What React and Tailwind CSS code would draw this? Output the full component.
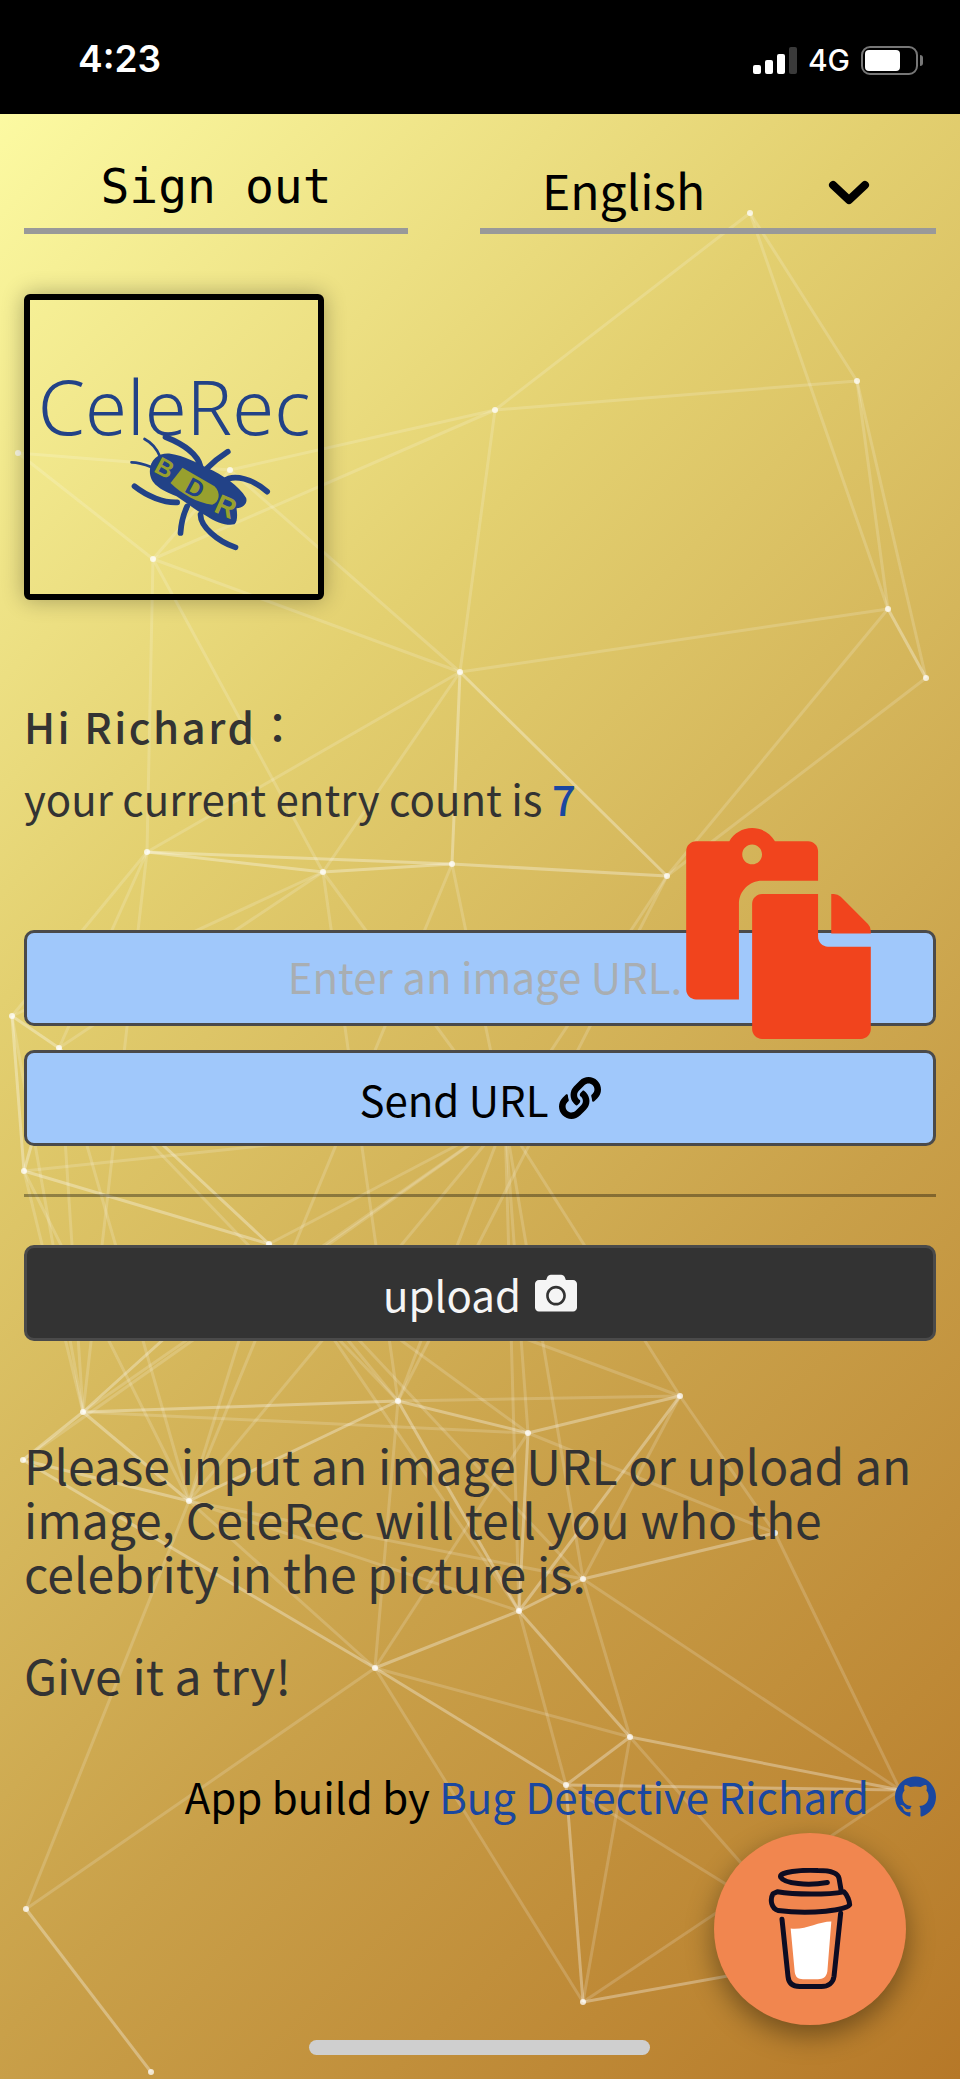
import { FaCamera, FaLink, FaPaste } from "react-icons/fa";
import { SiGithub } from "react-icons/si";

const NODES = {
  A: [750, 213], B: [857, 381], C: [495, 410], D: [888, 609], E: [926, 678], F: [460, 672],
  G: [153, 559], H: [230, 470], I: [18, 453], J: [147, 852], K: [323, 872], L: [452, 864],
  M: [667, 876], N: [12, 1016], O: [59, 1048], P: [24, 1171], Q: [269, 1244], R: [505, 1120],
  S: [83, 1412], T: [398, 1401], U: [528, 1433], V: [680, 1396], W: [23, 1460], X: [189, 1501],
  Y: [583, 1579], Z: [519, 1611], AA: [375, 1668], AB: [775, 1533], AC: [630, 1737], AD: [566, 1785],
  AE: [900, 1790], AF: [583, 2002], AG: [26, 1909], AH: [151, 2072], HA: [800, 1963], HB: [800, 1930],
};

const BRIGHT = "J-K K-L L-M J-L N-O N-P O-P P-Q O-Q S-W S-X S-T T-U U-V T-X W-X W-AA Z-AA Z-AC AD-AC AC-AE AD-AE T-Z U-Z V-Z Y-AB AA-AD AD-AF AG-AH D-E F-M F-L AF-HA Y-Z";
const FAINT =
  "A-B A-C C-B C-H C-F C-G B-D B-E A-D I-H I-G H-F G-H G-F G-J G-K F-J F-K F-D E-M D-M J-N J-O K-N K-O K-R L-R M-R " +
  "R-Q R-T R-U R-V R-X R-S R-P R-W P-S O-S O-X Q-T Q-U Q-S Q-X Q-V T-V T-AA U-AA V-AB U-AB S-U S-Q X-AA X-Z Y-AC AA-AC Y-AE AB-AE AE-AF AC-AF AG-X AG-AA AA-AF AD-HB AC-HB Z-AD " +
  "L-X M-T K-T J-S O-T N-S P-X Q-Z Q-Y R-Y R-Z V-Y X-Y";

function Network() {
  const edges = (list) => list.split(" ").map((e) => e.split("-"));
  return (
    <svg viewBox="0 0 960 2079" className="absolute inset-0 w-full h-full pointer-events-none">
      {edges(FAINT).map(([a, b]) => (
        <line key={a + b} x1={NODES[a][0]} y1={NODES[a][1]} x2={NODES[b][0]} y2={NODES[b][1]} stroke="#fff" strokeOpacity="0.17" strokeWidth="3" />
      ))}
      {edges(BRIGHT).map(([a, b]) => (
        <line key={a + b} x1={NODES[a][0]} y1={NODES[a][1]} x2={NODES[b][0]} y2={NODES[b][1]} stroke="#fff" strokeOpacity="0.32" strokeWidth="3" />
      ))}
      {Object.entries(NODES).map(([k, [x, y]]) => (
        <circle key={k} cx={x} cy={y} r="3" fill="#fff" fillOpacity="0.75" />
      ))}
    </svg>
  );
}

function Bug() {
  return (
    <svg viewBox="380 460 440 360" className="w-[147px] h-[120px] -mt-[13px] ml-[97px] self-start">
      <g fill="none" stroke="#224287" strokeLinecap="round">
        <path d="M432 478C455 490 470 510 478 530" strokeWidth="8" />
        <path d="M393 548C415 548 435 555 452 562" strokeWidth="8" />
        <path d="M495 472C540 490 590 520 600 560" strokeWidth="17" />
        <path d="M682 516C660 530 635 550 615 570" strokeWidth="17" />
        <path d="M670 605C700 580 760 600 800 636" strokeWidth="17" />
        <path d="M402 620C440 650 490 670 530 668" strokeWidth="17" />
        <path d="M560 680C548 705 542 730 540 760" strokeWidth="17" />
        <path d="M600 705C600 740 650 785 705 803" strokeWidth="17" />
      </g>
      <path d="M448 575C448 535 480 518 510 522C550 527 590 550 622 566C665 585 715 618 737 655C742 672 728 684 708 686C711 704 711 726 702 734C680 739 648 730 618 709C588 694 558 670 528 650C478 630 448 612 448 575Z" fill="#224287" />
      <path d="M510 610L546 564L642 620C662 640 657 668 635 675C590 670 543 642 510 610Z" fill="#98a02e" />
      <text x="490" y="590" transform="rotate(28 490 570)" fontFamily="'Liberation Sans',sans-serif" fontWeight="700" fontSize="74" fill="#98a02e" textAnchor="middle">B</text>
      <text x="584" y="650" transform="rotate(28 584 625)" fontFamily="'Liberation Sans',sans-serif" fontWeight="700" fontSize="72" fill="#224287" textAnchor="middle">D</text>
      <text x="677" y="710" transform="rotate(24 677 680)" fontFamily="'Liberation Sans',sans-serif" fontWeight="700" fontSize="84" fill="#98a02e" textAnchor="middle">R</text>
    </svg>
  );
}

function Cup() {
  return (
    <svg viewBox="320 385 255 365" className="w-[85px] h-[122px]">
      <path d="M388 566C430 572 470 545 510 545L498 695C495 712 485 718 470 718L425 718C410 718 402 712 400 695Z" fill="#fff" />
      <g fill="none" stroke="#0d0c22" strokeWidth="15" strokeLinecap="round" strokeLinejoin="round">
        <path d="M498 428C440 438 370 432 358 412C352 395 420 390 470 392C510 392 530 400 533 415L540 455" />
        <path d="M348 456C400 465 500 465 548 456C558 465 565 485 565 495C560 510 450 525 350 512C330 505 325 480 335 462Z" />
        <path d="M362 538L380 710C382 730 395 740 415 740L480 740C500 740 515 730 518 710L538 520" />
      </g>
    </svg>
  );
}

function StatusBar() {
  return (
    <div className="h-[114px] bg-black text-white flex items-center font-['Inter',sans-serif] relative">
      <span className="ml-[78px] text-[37px] font-semibold leading-none mt-[2px]">4:23</span>
      <div className="ml-auto mr-[37px] flex items-center gap-[11px] mt-[6px]">
        <div className="flex items-end gap-[4px] h-[27px]">
          <div className="w-[8px] h-[9px] bg-white rounded-[2px]" />
          <div className="w-[8px] h-[14px] bg-white rounded-[2px]" />
          <div className="w-[8px] h-[20px] bg-white rounded-[2px]" />
          <div className="w-[8px] h-[27px] bg-[#3a3a3a] rounded-[2px]" />
        </div>
        <span className="text-[30px] font-medium leading-none">4G</span>
        <div className="flex items-center gap-[2px]">
          <div className="w-[57px] h-[29px] border-2 border-[#777] rounded-[9px] p-[2px]">
            <div className="w-[35px] h-full bg-white rounded-[4px]" />
          </div>
          <div className="w-[3px] h-[11px] bg-[#777] rounded-r-full" />
        </div>
      </div>
    </div>
  );
}

export default function App() {
  return (
    <div className="relative w-full h-[2079px] overflow-hidden bg-[linear-gradient(135deg,#ffffa8,#e3d070_33%,#c9a049_67%,#b67828)] font-['Noto_Sans_CJK_TC','Noto_Sans',sans-serif]">
      <Network />
      <div className="relative">
        <StatusBar />

        <div className="px-6 flex justify-between">
          <button className="w-[384px] h-[120px] border-b-[6px] border-[#999] pt-[32px] text-[48px] leading-[60px] text-black font-['DejaVu_Sans_Mono',monospace]">
            <div className="-mt-[3px]">Sign out</div>
          </button>
          <div className="w-[456px] h-[120px] border-b-[6px] border-[#999] flex items-center pt-[35px] pl-[62px] pr-[66px] justify-between text-black text-[48px]">
            <span>English</span>
            <svg viewBox="0 0 42 26" className="w-[42px] h-[26px] mt-[8px]">
              <path d="M5 5L21 20L37 5" fill="none" stroke="#000" strokeWidth="8" strokeLinecap="round" strokeLinejoin="round" />
            </svg>
          </div>
        </div>

        <div className="ml-6 mt-[60px] w-[300px] h-[306px] border-[6px] border-black rounded-[6px] shadow-[0_0_22px_rgba(0,0,0,0.3)] flex flex-col items-center pt-[66px]">
          <div className="text-[76px] leading-[80px] text-[#224287] font-light font-['Noto_Sans',sans-serif]">CeleRec</div>
          <Bug />
        </div>

        <div className="px-6 mt-[96px] text-[#333]">
          <div className="text-[42px] leading-[60px] tracking-[2.5px] font-medium">Hi Richard：</div>
          <div className="text-[42px] leading-[60px] mt-[12px]">
            your current entry count is <span className="text-[#1a47a0] font-medium">7</span>
          </div>
        </div>

        <div className="relative px-6 mt-[102px]">
          <input
            placeholder="Enter an image URL."
            className="w-full h-[96px] bg-[#a0c8fb] border-[3px] border-[#4a4a4a] rounded-[10px] pl-[10px] pb-[5px] text-center text-[42px] placeholder:text-[#a9aeb2] outline-none"
          />
          <FaPaste className="absolute right-[76px] -top-[102px] text-[#f1441d]" size={211} />
          <button className="w-full h-[96px] mt-[24px] bg-[#a0c8fb] border-[3px] border-[#4a4a4a] rounded-[10px] flex items-center justify-center gap-[10px] text-black text-[42px]">
            Send URL <FaLink size={42} />
          </button>
          <div className="h-[3px] bg-black/35 mt-[48px]" />
          <button className="w-full h-[96px] mt-[48px] bg-[#333] border-[3px] border-[#4a4a4a] rounded-[10px] flex items-center justify-center gap-[14px] text-[#f5f5f5] text-[42px]">
            upload <FaCamera size={42} />
          </button>
        </div>

        <div className="px-6 mt-[96px] text-[48px] leading-[54px] text-[#333]">
          <p>Please input an image URL or upload an image, CeleRec will tell you who the celebrity in the picture is.</p>
          <p className="mt-[48px]">Give it a try!</p>
        </div>

        <div className="px-6 mt-[65px] flex justify-end items-center text-[42px] leading-[60px] text-black">
          <span>
            App build by <span className="text-[#1a47a0]">Bug Detective Richard</span>
          </span>
          <SiGithub className="ml-[26px] text-[#1a47a0]" size={41} />
        </div>
      </div>

      <div className="absolute left-[714px] top-[1833px] w-[192px] h-[192px] rounded-full bg-[#f1864f] shadow-[0_10px_28px_rgba(0,0,0,0.4)] flex items-center justify-center">
        <Cup />
      </div>
      <div className="absolute left-[309px] top-[2040px] w-[341px] h-[15px] rounded-[8px] bg-[#cfcfcf]" />
    </div>
  );
}
